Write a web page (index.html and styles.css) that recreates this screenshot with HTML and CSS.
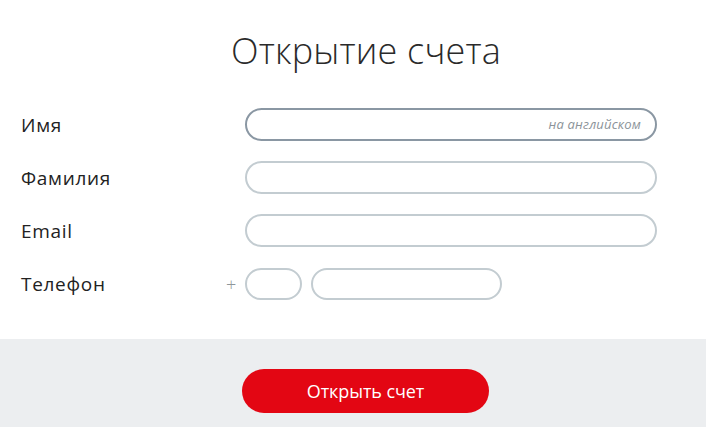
FILE: index.html
```html
<!DOCTYPE html>
<html lang="ru">
<head>
<meta charset="utf-8">
<title>Открытие счета</title>
<link rel="stylesheet" href="styles.css">
</head>
<body>
<div class="page">
  <h1 class="title">Открытие счета</h1>
  <form class="form">
    <div class="row">
      <label class="label">Имя</label>
      <div class="field">
        <input class="input input-focus" type="text">
        <span class="hint">на английском</span>
      </div>
    </div>
    <div class="row">
      <label class="label">Фамилия</label>
      <div class="field"><input class="input" type="text"></div>
    </div>
    <div class="row">
      <label class="label">Email</label>
      <div class="field"><input class="input" type="text"></div>
    </div>
    <div class="row">
      <label class="label">Телефон</label>
      <div class="field phone">
        <span class="plus">+</span>
        <input class="input input-code" type="text">
        <input class="input input-num" type="text">
      </div>
    </div>
  </form>
  <div class="footer">
    <button class="btn" type="button">Открыть счет</button>
  </div>
</div>
</body>
</html>
```
FILE: styles.css
```css
* { box-sizing: border-box; }
html, body { margin: 0; padding: 0; background: #fff; }
body { font-family: "Open Sans", "Noto Sans", sans-serif; color: #222; }
.page { width: 706px; height: 427px; display: flex; flex-direction: column; }
.title {
  margin: 0;
  padding: 27px 0 0 26px;
  height: 101px;
  text-align: center;
  font-weight: 300;
  font-size: 36px;
  line-height: 48px;
  color: #2a2a2a;
  letter-spacing: 0.2px;
}
.form { display: flex; flex-direction: column; gap: 20px; padding-left: 21px; height: 238px; padding-top: 7px; }
.row { display: flex; align-items: center; height: 33px; }
.label { width: 224px; font-size: 19px; letter-spacing: 0.7px; color: #222; }
.field { position: relative; display: flex; align-items: center; }
.input {
  width: 412px;
  height: 33px;
  border: 2px solid #c3ccd1;
  border-radius: 17px;
  background: #fff;
  outline: none;
  font: inherit;
}
.input-focus { border-color: #8a97a3; }
.hint {
  position: absolute;
  right: 16px;
  top: 7px;
  font-size: 13px;
  font-style: italic;
  color: #8b9399;
  letter-spacing: 0.2px;
}
.phone { margin-left: -19px; }
.plus { width: 19px; font-size: 18px; color: #8f969a; font-weight: 300; }
.input-code { width: 57px; height: 32px; }
.input-num { width: 191px; height: 32px; margin-left: 9px; }
.footer {
  flex: 1;
  background: #eceef0;
  display: flex;
  justify-content: center;
  padding: 30px 0 0 25px;
}
.btn {
  width: 247px;
  height: 44px;
  border: none;
  border-radius: 22px;
  background: #e30613;
  color: #fff;
  font-family: "Open Sans", "Noto Sans", sans-serif;
  font-size: 18px;
  letter-spacing: -0.1px;
}
```
